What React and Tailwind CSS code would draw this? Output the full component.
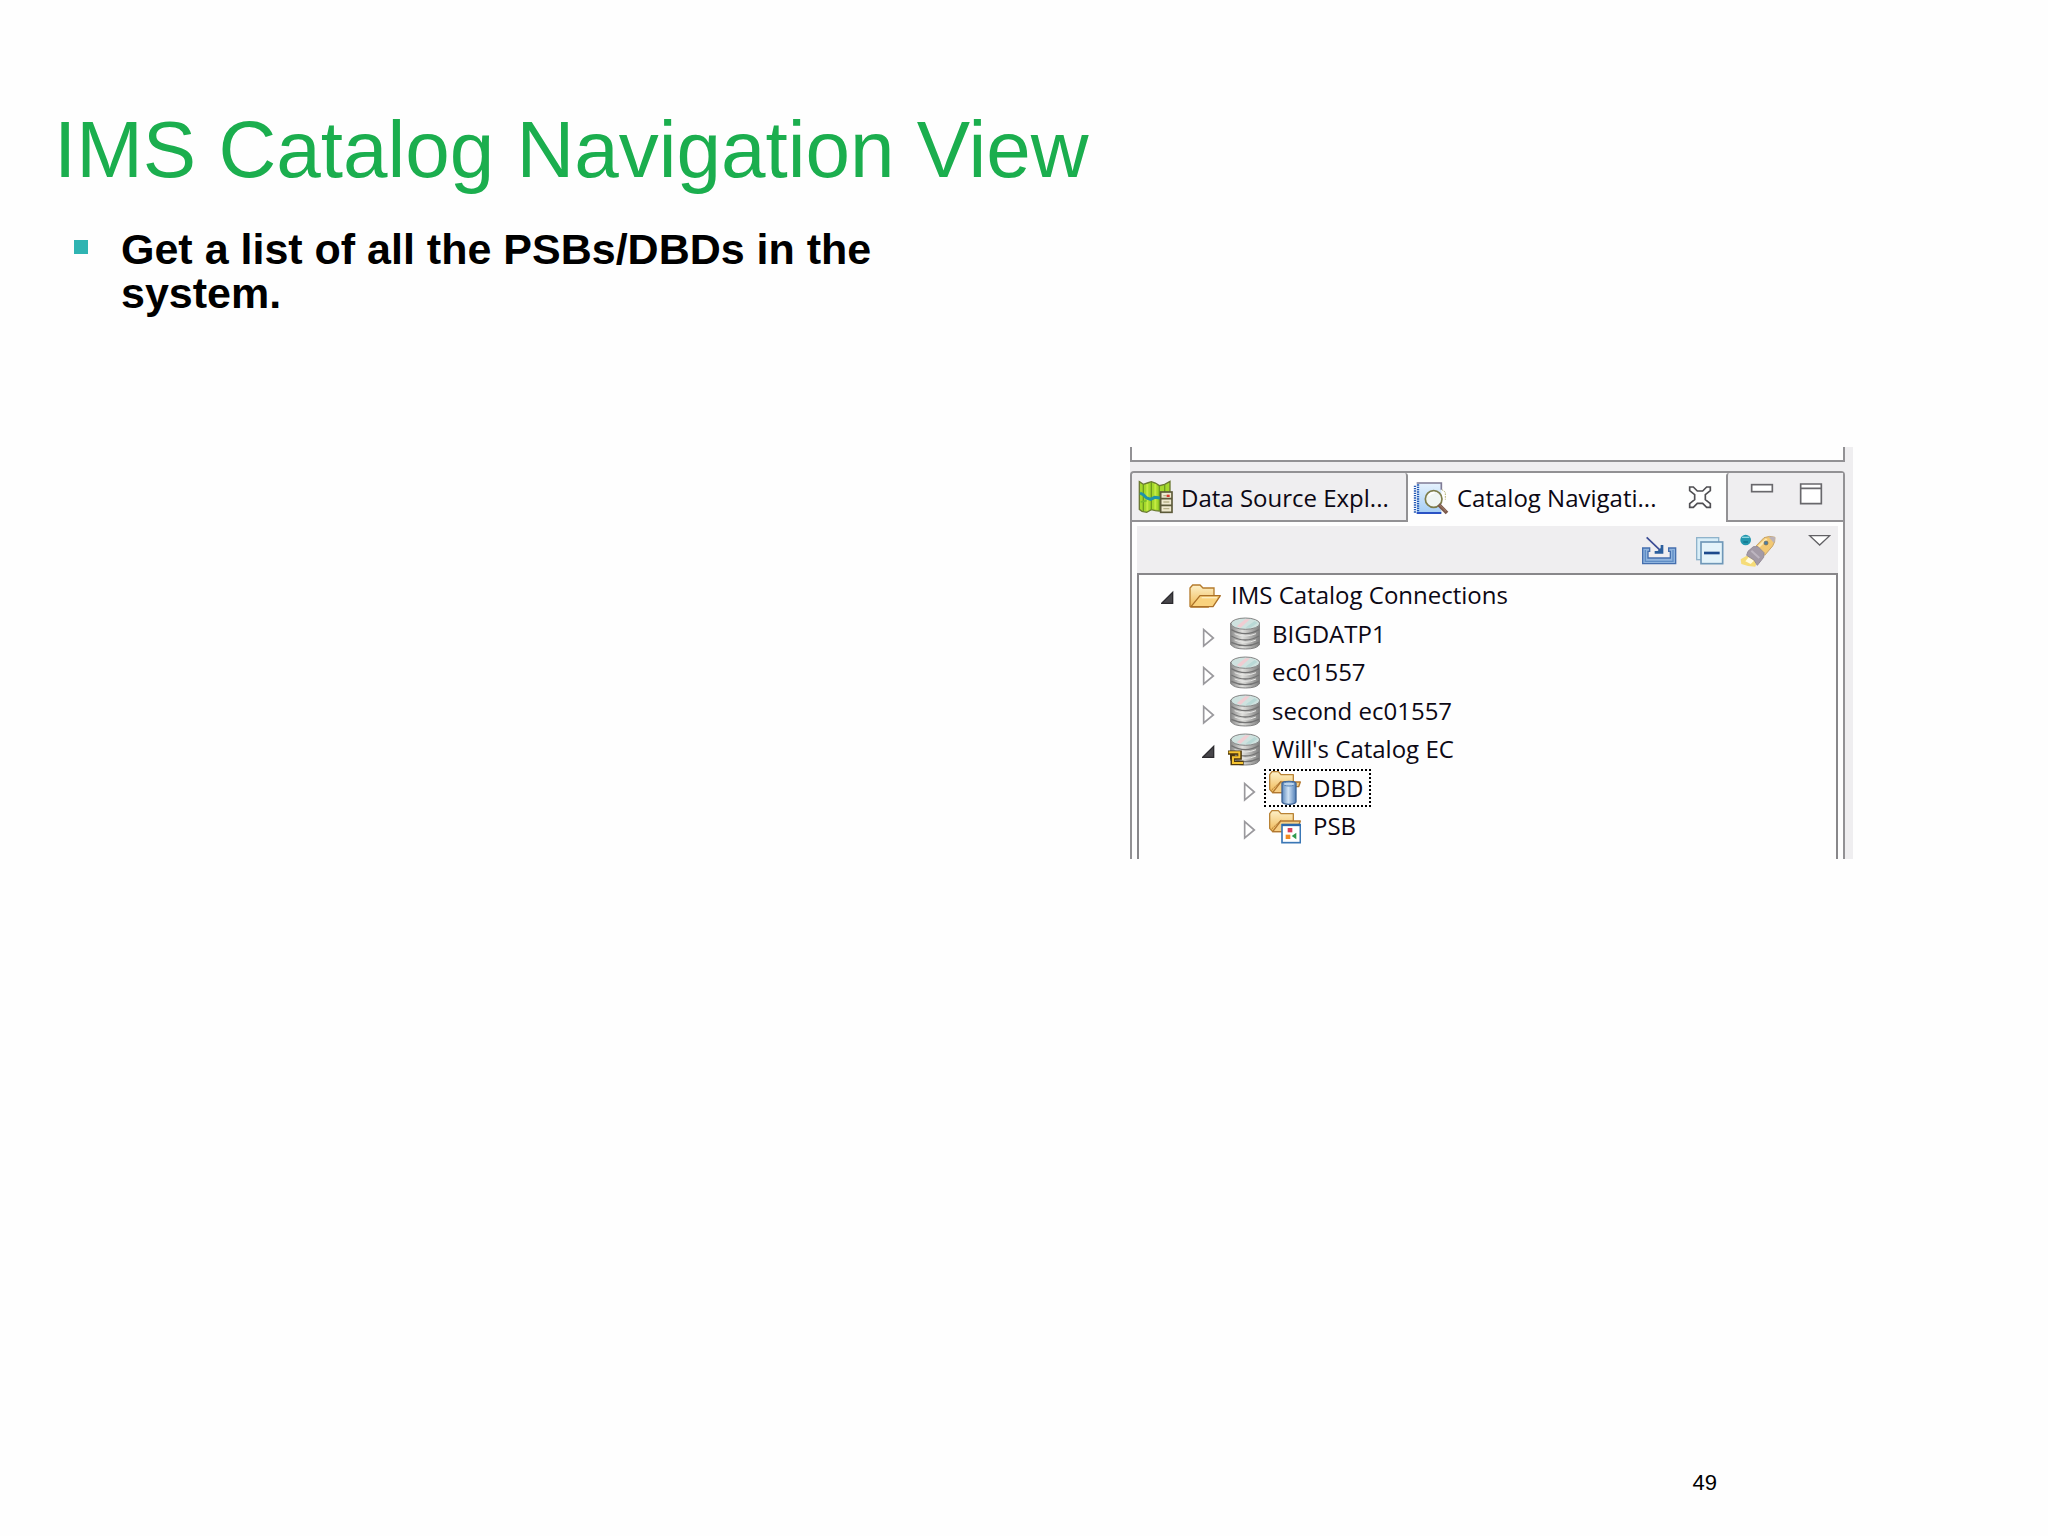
import React from "react";

const MapIcon = () => (
  <svg className="h-[34px] w-[35px] shrink-0" viewBox="54 114 105 102" aria-hidden="true">
    <path d="M58 119 L70 127 L82 123 L94 119 L106 123 L118 131 L134 127 L150 118 V206 L136 203 L118 207 L106 206 L94 203 L80 211 L66 208 L58 202 Z" fill="#a4d82c" stroke="#6c7a34" strokeWidth="4" />
    <path d="M70 128 V208 M94 120 V204 M118 132 V206 M134 128 V150" stroke="#6d9a20" strokeWidth="4" fill="none" />
    <path d="M82 126 V206 M106 126 V202" stroke="#c6ea44" strokeWidth="6" fill="none" />
    <path d="M60 153 L70 158 L80 168 L92 172 L104 166 L120 168" stroke="#1f93a8" strokeWidth="9" fill="none" />
    <path d="M62 180 L80 176" stroke="#7cbf2a" strokeWidth="5" />
    <rect x="122" y="150" width="34" height="61" fill="#efe9cf" stroke="#5d5a3a" strokeWidth="5" />
    <path d="M122 170 H156 M122 190 H156" stroke="#5d5a3a" strokeWidth="5" />
    <path d="M130 161 H140 M130 180 H148 M130 200 H148" stroke="#b9b28a" strokeWidth="4" />
    <rect x="140" y="158" width="9" height="7" fill="#d8372c" />
  </svg>
);

const CatalogIcon = () => (
  <svg className="h-[34px] w-[36px] shrink-0" viewBox="39 120 108 102" aria-hidden="true">
    <defs>
      <linearGradient id="book" x1="0" y1="0" x2="0" y2="1">
        <stop offset="0" stopColor="#e6f2fd" />
        <stop offset="1" stopColor="#a4cdf5" />
      </linearGradient>
    </defs>
    <rect x="51" y="126" width="73" height="90" fill="url(#book)" />
    <path d="M50 126 H124 V146" stroke="#7f7b95" strokeWidth="5" fill="none" />
    <path d="M50 216 H124" stroke="#2a52c4" strokeWidth="6" />
    <path d="M45 134 V218" stroke="#2459b5" strokeWidth="7" strokeDasharray="4 3" />
    <path d="M54 130 V214" stroke="#2459b5" strokeWidth="7" strokeDasharray="4 3" />
    <circle cx="101" cy="174" r="25" fill="#f0f5f2" stroke="#7e7d4a" strokeWidth="5" />
    <path d="M86 164 Q93 154 104 155" stroke="#ffffff" strokeWidth="5" fill="none" />
    <path d="M126 146 L136 154 V176" stroke="#b5b172" strokeWidth="3" fill="none" strokeDasharray="5 3" />
    <path d="M116 191 L141 216" stroke="#7b594b" strokeWidth="11" />
    <path d="M119 192 L138 211" stroke="#a98470" strokeWidth="3" />
  </svg>
);

const CloseIcon = () => (
  <svg className="size-[24px]" viewBox="204 132 72 72" aria-hidden="true">
    <path d="M209 138 H220 L232 150 H248 L260 138 H271 V149 L256 161 V176 L271 188 V199 H260 L248 187 H232 L220 199 H209 V188 L224 176 V161 L209 149 Z" fill="#fff" stroke="#504f53" strokeWidth="5" />
  </svg>
);

const MinimizeIcon = () => (
  <svg className="h-[10px] w-[24px]" viewBox="390 128 72 30" aria-hidden="true">
    <rect x="395" y="133" width="62" height="21" fill="#fff" stroke="#69686c" strokeWidth="5" />
  </svg>
);

const MaximizeIcon = () => (
  <svg className="size-[24px]" viewBox="537 129 72 72" aria-hidden="true">
    <path d="M542 132 H604 V191 H542 Z M542 145 H604" fill="#fff" stroke="#69686c" strokeWidth="5" />
  </svg>
);

const ImportIcon = () => (
  <svg className="h-[29px] w-[36px]" viewBox="63 288 108 87" aria-hidden="true">
    <path d="M68 324 H89 V334 H84 V354 H151 V334 H146 V324 H167 V371 H68 Z" fill="#8fb4de" stroke="#456fae" strokeWidth="4" />
    <path d="M76 330 V364 H159 V330" fill="none" stroke="#5f8dc6" strokeWidth="4" />
    <path d="M80 292 L124 334" stroke="#3a4b94" strokeWidth="5" />
    <path d="M130 315 V341 H104 V333 H113 L122 324 V315 Z" fill="#2b5f9e" />
  </svg>
);

const CollapseIcon = () => (
  <svg className="size-[29px]" viewBox="225 288 87 87" aria-hidden="true">
    <rect x="230" y="293" width="66" height="66" fill="#d9eef8" stroke="#8fb3cb" strokeWidth="4" />
    <rect x="243" y="306" width="65" height="65" fill="#e4f3fa" stroke="#6f97b8" strokeWidth="5" />
    <path d="M252 339 H299" stroke="#1d4a8c" strokeWidth="8" />
  </svg>
);

const RocketIcon = () => (
  <svg className="h-[35px] w-[37px]" viewBox="357 279 111 105" aria-hidden="true">
    <circle cx="377" cy="300" r="16" fill="#2497ae" />
    <path d="M366 292 H388" stroke="#8fd6e0" strokeWidth="4" />
    <path d="M370 306 H384" stroke="#0f7189" strokeWidth="4" />
    <path d="M384 345 L362 358 L364 372 L384 378 L406 380 L412 362 Z" fill="#f6dc78" />
    <path d="M386 352 L376 364 L392 372 L402 362 Z" fill="#fffbe0" />
    <path d="M408 318 L432 293 Q450 286 465 292 Q466 306 458 318 L434 346 Z" fill="#f2c873" stroke="#c7a468" strokeWidth="3" />
    <path d="M416 320 L440 297" stroke="#fde9b4" strokeWidth="7" />
    <path d="M446 291 Q456 287 465 292 Q466 300 462 309 Z" fill="#bdb3b8" />
    <circle cx="438" cy="309" r="6" fill="#4b7fa8" stroke="#7b6a48" strokeWidth="2" />
    <path d="M384 334 L400 320 L414 320 L432 338 L431 352 L412 376 L402 360 L380 346 Z" fill="#a39aa6" stroke="#948b98" strokeWidth="3" />
    <path d="M394 332 L418 354" stroke="#bdb5c0" strokeWidth="6" />
  </svg>
);

const MenuIcon = () => (
  <svg className="h-[12px] w-[23px]" viewBox="564 282 69 36" aria-hidden="true">
    <path d="M569 287 H629 L599 315 Z" fill="#fff" stroke="#626165" strokeWidth="4" />
  </svg>
);

const SharedGradients = () => (
  <svg className="absolute size-0" aria-hidden="true">
    <defs>
      <linearGradient id="gold" x1="0" y1="0" x2="0" y2="1">
        <stop offset="0" stopColor="#fdf0c8" />
        <stop offset="1" stopColor="#f0b955" />
      </linearGradient>
      <linearGradient id="steel" x1="0" y1="0" x2="1" y2="0">
        <stop offset="0" stopColor="#8b8b8b" />
        <stop offset="0.4" stopColor="#e0e0dd" />
        <stop offset="1" stopColor="#7d7d7d" />
      </linearGradient>
      <linearGradient id="blue" x1="0" y1="0" x2="1" y2="0">
        <stop offset="0" stopColor="#5a87bd" />
        <stop offset="0.45" stopColor="#cfe2f5" />
        <stop offset="1" stopColor="#4f7db6" />
      </linearGradient>
    </defs>
  </svg>
);

const OpenFolderIcon = () => (
  <svg className="h-[25px] w-[34px] shrink-0" viewBox="202 44 102 75" aria-hidden="true">
    <path d="M211 114 V59 L219 50 H241 L250 59 H283 V82 L266 116 H214 Z" fill="url(#gold)" stroke="#b57b2c" strokeWidth="4" />
    <path d="M214 115 L241 82 H302 L280 115 Z" fill="#f9d27e" stroke="#ab7028" strokeWidth="4" strokeLinejoin="round" />
    <path d="M246 88 H292" stroke="#fdecc0" strokeWidth="4" />
  </svg>
);

const Cylinder = () => (
  <g>
    <path d="M332 160 V224 Q340 238 376 238 Q412 238 419 224 V160 Z" fill="url(#steel)" stroke="#7e7e7e" strokeWidth="3" />
    <path d="M334 180 Q376 204 417 180 M334 199 Q376 223 417 199 M334 218 Q376 238 417 218" fill="none" stroke="#747474" strokeWidth="4" />
    <path d="M344 192 Q376 206 408 192 M344 211 Q376 225 408 211" fill="none" stroke="#e6e6e4" strokeWidth="3" />
    <ellipse cx="376" cy="162" rx="43" ry="17" fill="#cfe2df" stroke="#858585" strokeWidth="3" />
    <path d="M350 170 L376 149 L390 149 L362 174 Z" fill="#f0cdd2" />
    <path d="M376 174 L404 154 L412 160 L392 174 Z" fill="#b9d9d6" />
  </g>
);

const DatabaseIcon = () => (
  <svg className="h-[33px] w-[32px] shrink-0" viewBox="324 142 96 99" aria-hidden="true">
    <Cylinder />
  </svg>
);

const ConnectedDatabaseIcon = () => (
  <svg className="h-[33px] w-[32px] shrink-0" viewBox="324 142 96 99" aria-hidden="true">
    <Cylinder />
    <path d="M324 201 H359 V216 H344 M330 214 H338 V232 H371" fill="none" stroke="#4f390e" strokeWidth="13" />
    <path d="M326 200 H358 V215 H339 V232 H369" fill="none" stroke="#f5c431" strokeWidth="6" />
  </svg>
);

const FolderPair = () => (
  <g strokeLinejoin="round">
    <path d="M449 302 V258 L456 249 H475 L483 258 H520 V284 L500 312 H458 Z" fill="url(#gold)" stroke="#b98336" strokeWidth="4" />
    <path d="M458 312 L482 280 H541 L536 294 H524 L500 312 Z" fill="#f7cf86" stroke="#b27830" strokeWidth="4" />
    <path d="M455 304 L484 276" stroke="#a86f2b" strokeWidth="3" strokeDasharray="5 3" />
  </g>
);

const DbdIcon = () => (
  <svg className="h-[35px] w-[32px] shrink-0" viewBox="447 244 96 105" aria-hidden="true">
    <FolderPair />
    <path d="M486 284 Q488 278 507 278 Q526 278 528 284 V340 Q524 347 507 347 Q490 347 486 340 Z" fill="url(#blue)" stroke="#3d6396" strokeWidth="4" />
    <ellipse cx="507" cy="286" rx="18" ry="6" fill="#bcd4ec" stroke="#5681b4" strokeWidth="3" />
  </svg>
);

const PsbIcon = () => (
  <svg className="h-[35px] w-[32px] shrink-0" viewBox="447 244 96 105" aria-hidden="true">
    <FolderPair />
    <rect x="486" y="291" width="55" height="54" fill="#fff" stroke="#3a77b5" strokeWidth="5" />
    <path d="M486 292 H541" stroke="#2c68ab" strokeWidth="7" />
    <rect x="503" y="301" width="14" height="13" fill="#d8405a" />
    <rect x="497" y="321" width="14" height="13" fill="#f08a24" />
    <path d="M529 315 V335 L515 325 Z" fill="#2e9b4e" />
  </svg>
);

const ClosedArrow = () => (
  <svg className="h-[30px] w-[14px]" viewBox="246 148 42 90" aria-hidden="true">
    <path d="M251 180 V229 L280 205 Z" fill="#fff" stroke="#9a999d" strokeWidth="5" />
  </svg>
);

const OpenArrow = () => (
  <svg className="h-[20px] w-[14px]" viewBox="121 48 42 60" aria-hidden="true">
    <path d="M156 70 V103 H123 Z" fill="#47464a" stroke="#2c2b2f" strokeWidth="4" />
  </svg>
);

const rows = [
  { label: "IMS Catalog Connections", Icon: OpenFolderIcon, level: 1, indent: "pl-[22px]", open: true, wide: true },
  { label: "BIGDATP1", Icon: DatabaseIcon, level: 2, indent: "pl-[63px]" },
  { label: "ec01557", Icon: DatabaseIcon, level: 2, indent: "pl-[63px]" },
  { label: "second ec01557", Icon: DatabaseIcon, level: 2, indent: "pl-[63px]" },
  { label: "Will's Catalog EC", Icon: ConnectedDatabaseIcon, level: 2, indent: "pl-[63px]", open: true },
  { label: "DBD", Icon: DbdIcon, level: 3, indent: "pl-[104px]", focused: true },
  { label: "PSB", Icon: PsbIcon, level: 3, indent: "pl-[104px]" },
];

function TreeRow({ label, Icon, level, indent, open, focused, wide }) {
  return (
    <li role="treeitem" aria-level={level} aria-expanded={!!open} className={`flex h-[38px] items-center gap-[7px] ${indent}`}>
      <button type="button" aria-label={`Toggle ${label}`} className="shrink-0">
        {open ? <OpenArrow /> : <ClosedArrow />}
      </button>
      <span
        className={`flex h-[38px] items-center border-2 border-dotted pr-[6px] pl-[3px] whitespace-nowrap ${
          focused ? "border-black" : "border-transparent"
        } ${wide ? "gap-[10px]" : "gap-[12px]"}`}
      >
        <Icon />
        <span>{label}</span>
      </span>
    </li>
  );
}

function CatalogPanel() {
  return (
    <section aria-label="Catalog Navigation" className="bg-[#efeef0] pr-[8px] font-['Open_Sans','Noto_Sans',sans-serif] text-[24px] leading-[34px] text-[#0c0814]">
      <div className="h-[15px] border-x-2 border-b-2 border-[#929194] bg-[#fefefe]" />
      <div className="mt-[9px] rounded-t-[4px] border-x-2 border-t-2 border-[#929194] bg-[#fefefe]">
        <div role="tablist" className="flex h-[49px]">
          <button role="tab" type="button" aria-selected="false" className="flex w-[276px] items-center gap-[8px] rounded-tl-[3px] rounded-tr-[3px] border-r-2 border-b-2 border-[#929194] bg-[#efeef0] pl-[6px] whitespace-nowrap">
            <MapIcon />
            <span className="pt-[2px]">Data Source Expl...</span>
          </button>
          <div className="flex w-[318px] items-center justify-between bg-[#fefefe] pr-[14px] pl-[5px]">
            <button role="tab" type="button" aria-selected="true" className="flex items-center gap-[8px] whitespace-nowrap">
              <CatalogIcon />
              <span>Catalog Navigati...</span>
            </button>
            <button type="button" aria-label="Close" className="pb-[2px]"><CloseIcon /></button>
          </div>
          <div className="flex flex-1 items-start justify-end gap-[25px] rounded-tl-[3px] border-b-2 border-l-2 border-[#929194] bg-[#efeef0] pt-[10px] pr-[20px]">
            <button type="button" aria-label="Minimize"><MinimizeIcon /></button>
            <button type="button" aria-label="Maximize"><MaximizeIcon /></button>
          </div>
        </div>
        <div className="px-[5px] pt-[4px]">
          <div role="toolbar" className="flex h-[47px] items-center justify-end bg-[#efeef0] pt-[2px] pr-[7px]">
            <button type="button" aria-label="Import" className="mr-[18px]"><ImportIcon /></button>
            <button type="button" aria-label="Collapse all" className="mr-[15px]"><CollapseIcon /></button>
            <button type="button" aria-label="Launch" className="mr-[32px]"><RocketIcon /></button>
            <button type="button" aria-label="View menu" className="self-start pt-[6px]"><MenuIcon /></button>
          </div>
          <ul role="tree" className="flex h-[286px] flex-col justify-between border-x-2 border-t-2 border-[#88878a] pt-[1px] pb-[14px]">
            {rows.map((row) => (
              <TreeRow key={row.label} {...row} />
            ))}
          </ul>
        </div>
      </div>
    </section>
  );
}

export default function App() {
  return (
    <div className="flex min-h-screen flex-col bg-[#fefefe] font-['Liberation_Sans',Arial,sans-serif] text-black">
      <SharedGradients />
      <h1 className="pt-[110px] pl-[54px] text-[80px] leading-none text-[#1bae4e]">IMS Catalog Navigation View</h1>
      <main className="mt-[37px] grid grid-cols-[1130fr_723fr_195fr] items-start">
        <ul className="pl-[74px]">
          <li className="flex items-start gap-[33px]">
            <span className="mt-[13px] size-[14px] shrink-0 bg-[#2fb4b2]" />
            <p className="max-w-[800px] text-[43px] leading-[44px] font-bold">Get a list of all the PSBs/DBDs in the system.</p>
          </li>
        </ul>
        <div className="mt-[220px]">
          <CatalogPanel />
        </div>
      </main>
      <footer className="mt-auto flex justify-end pr-[331px] pb-[41px] text-[22px] leading-[24px]">49</footer>
    </div>
  );
}
